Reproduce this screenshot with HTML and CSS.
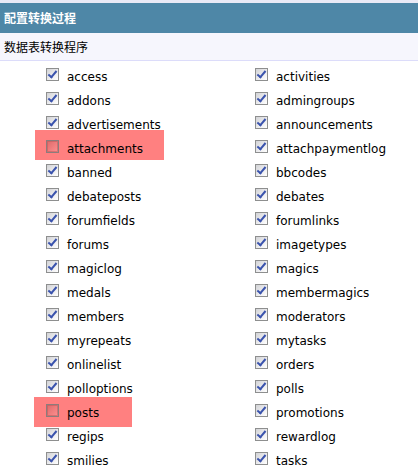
FILE: index.html
```html
<!DOCTYPE html>
<html lang="zh">
<head>
<meta charset="utf-8">
<title>配置转换过程</title>
<link rel="stylesheet" href="styles.css">
</head>
<body>
<div class="topline"></div>
<div class="header">配置转换过程</div>
<div class="sub">数据表转换程序</div>
<div class="list">
  <label class="item"><span class="cb on"></span>access</label>
  <label class="item"><span class="cb on"></span>activities</label>
  <label class="item"><span class="cb on"></span>addons</label>
  <label class="item"><span class="cb on"></span>admingroups</label>
  <label class="item"><span class="cb on"></span>advertisements</label>
  <label class="item"><span class="cb on"></span>announcements</label>
  <label class="item mark mark-a"><span class="cb off"></span>attachments</label>
  <label class="item"><span class="cb on"></span>attachpaymentlog</label>
  <label class="item"><span class="cb on"></span>banned</label>
  <label class="item"><span class="cb on"></span>bbcodes</label>
  <label class="item"><span class="cb on"></span>debateposts</label>
  <label class="item"><span class="cb on"></span>debates</label>
  <label class="item"><span class="cb on"></span>forumfields</label>
  <label class="item"><span class="cb on"></span>forumlinks</label>
  <label class="item"><span class="cb on"></span>forums</label>
  <label class="item"><span class="cb on"></span>imagetypes</label>
  <label class="item"><span class="cb on"></span>magiclog</label>
  <label class="item"><span class="cb on"></span>magics</label>
  <label class="item"><span class="cb on"></span>medals</label>
  <label class="item"><span class="cb on"></span>membermagics</label>
  <label class="item"><span class="cb on"></span>members</label>
  <label class="item"><span class="cb on"></span>moderators</label>
  <label class="item"><span class="cb on"></span>myrepeats</label>
  <label class="item"><span class="cb on"></span>mytasks</label>
  <label class="item"><span class="cb on"></span>onlinelist</label>
  <label class="item"><span class="cb on"></span>orders</label>
  <label class="item"><span class="cb on"></span>polloptions</label>
  <label class="item"><span class="cb on"></span>polls</label>
  <label class="item mark mark-p"><span class="cb off"></span>posts</label>
  <label class="item"><span class="cb on"></span>promotions</label>
  <label class="item"><span class="cb on"></span>regips</label>
  <label class="item"><span class="cb on"></span>rewardlog</label>
  <label class="item"><span class="cb on"></span>smilies</label>
  <label class="item"><span class="cb on"></span>tasks</label>
</div>
</body>
</html>
```
FILE: styles.css
```css
html, body {
  margin: 0;
  padding: 0;
  background: #ffffff;
}
body {
  font-family: "DejaVu Sans", "Noto Sans CJK SC", sans-serif;
  font-size: 12px;
  color: #000000;
  overflow: hidden;
}
.topline {
  height: 3px;
  background: #e9eaf6;
}
.header {
  height: 30px;
  line-height: 30px;
  padding-left: 4px;
  background: #4e87a7;
  color: #ffffff;
  font-family: "Noto Sans CJK SC", sans-serif;
  font-size: 12px;
  font-weight: bold;
}
.sub {
  height: 27px;
  line-height: 27px;
  padding-left: 4px;
  background: #f6f6fd;
  border-bottom: 1px solid #dcdcfa;
  font-family: "Noto Sans CJK SC", sans-serif;
  font-size: 12px;
}
.list {
  display: grid;
  grid-template-columns: 209px 209px;
  margin-top: 4px;
}
.item {
  position: relative;
  z-index: 0;
  height: 24px;
  display: flex;
  align-items: center;
  padding-left: 46px;
  white-space: nowrap;
}
.cb {
  position: relative;
  flex: none;
  width: 13px;
  height: 13px;
  box-sizing: border-box;
  margin-right: 8px;
  margin-top: -5px;
  border: 1px solid #8e8f8f;
  background: linear-gradient(135deg, #d2d3d6 0%, #eeeef0 60%, #ffffff 100%);
}
.cb.on::after {
  content: "";
  position: absolute;
  left: 3px;
  top: 0px;
  width: 3px;
  height: 7px;
  border-right: 2px solid #3a53ad;
  border-bottom: 2px solid #3a53ad;
  transform: rotate(40deg);
}
.cb.off {
  border-color: #8c7c7c;
  background: linear-gradient(135deg, rgba(120, 40, 40, 0.25) 0%, rgba(255, 255, 255, 0.12) 100%);
  box-shadow: inset 0 0 0 1px rgba(180, 90, 90, 0.5);
}
.mark::before {
  content: "";
  position: absolute;
  z-index: -1;
  height: 30px;
  background: #ff8080;
}
.mark-a::before {
  left: 35px;
  width: 129px;
  top: -7px;
}
.mark-p::before {
  left: 34px;
  width: 98px;
  top: -4px;
}
```
